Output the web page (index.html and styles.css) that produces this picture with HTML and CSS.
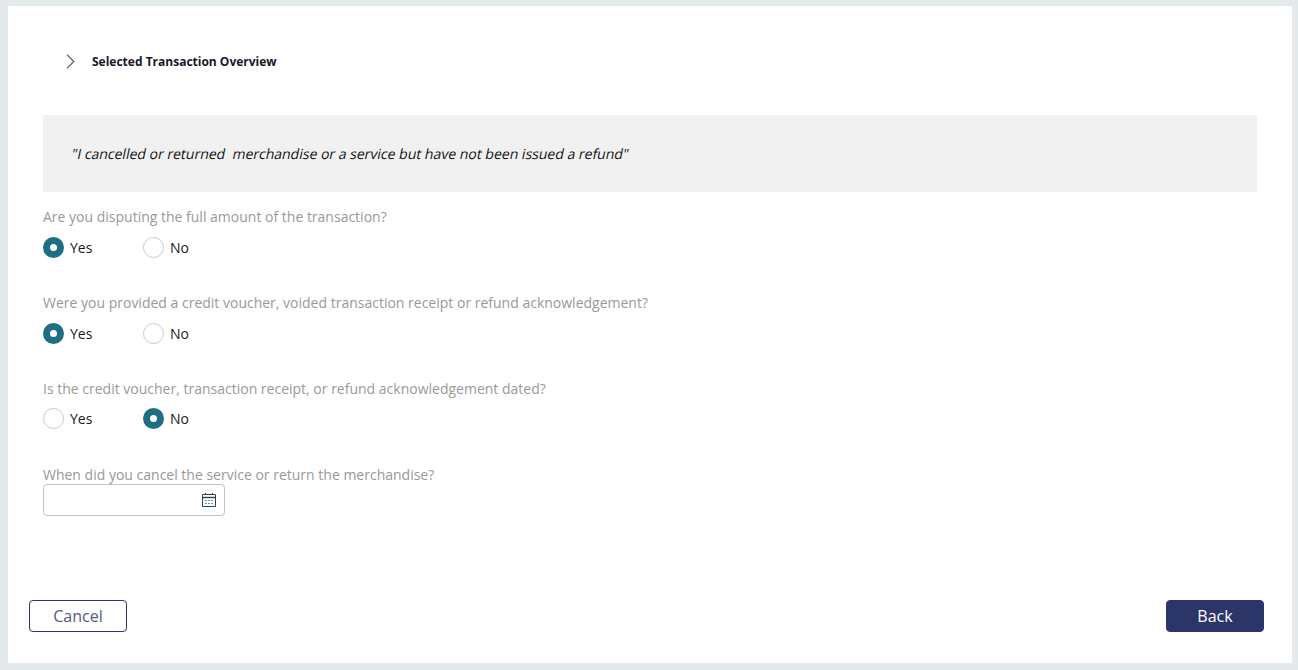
FILE: index.html
```html
<!DOCTYPE html>
<html lang="en">
<head>
<meta charset="utf-8">
<title>Dispute</title>
<link rel="stylesheet" href="styles.css">
</head>
<body>
<main class="card">
  <div class="content">
    <header class="overview">
      <svg class="chevron" width="9" height="15" viewBox="0 0 9 15"><path d="M1 .7 7.8 7.5 1 14.3" fill="none" stroke="#4a5568" stroke-width="1.1"/></svg>
      <h2 class="overview-title">Selected Transaction Overview</h2>
    </header>
    <div class="quote"><span class="quote-text">"I cancelled or returned&nbsp; merchandise or a service but have not been issued a refund"</span></div>
    <section class="question">
      <div class="label">Are you disputing the full amount of the transaction?</div>
      <div class="radios">
        <label class="radio"><span class="dot on"></span>Yes</label>
        <label class="radio"><span class="dot"></span>No</label>
      </div>
    </section>
    <section class="question">
      <div class="label">Were you provided a credit voucher, voided transaction receipt or refund acknowledgement?</div>
      <div class="radios">
        <label class="radio"><span class="dot on"></span>Yes</label>
        <label class="radio"><span class="dot"></span>No</label>
      </div>
    </section>
    <section class="question">
      <div class="label">Is the credit voucher, transaction receipt, or refund acknowledgement dated?</div>
      <div class="radios tight">
        <label class="radio"><span class="dot"></span>Yes</label>
        <label class="radio"><span class="dot on"></span>No</label>
      </div>
    </section>
    <section class="question">
      <div class="label">When did you cancel the service or return the merchandise?</div>
      <div class="date">
        <svg width="14" height="14" viewBox="0 0 14 14" fill="none"><path d="M.5 1.5h13v12H.5z" stroke="#2b4257"/><path d="M0 4.5h14" stroke="#2b4257" stroke-width="1.4"/><path d="M3.5 0v2M10.5 0v2" stroke="#2b4257"/><path d="M3 7.5h2M6 7.5h2M9 7.5h2M3 10.5h2M6 10.5h2M9 10.5h2" stroke="#7d8b99"/></svg>
      </div>
    </section>
  </div>
  <footer class="actions">
    <button class="btn ghost">Cancel</button>
    <button class="btn solid">Back</button>
  </footer>
</main>
</body>
</html>
```
FILE: styles.css
```css
* { box-sizing: border-box; }
html, body { height: 100%; }
body {
  margin: 0;
  padding: 6px 6px 7px 8px;
  background: #e4e9ec;
  font-family: "Open Sans", "Liberation Sans", sans-serif;
  font-size: 14px;
  color: #1a1a1a;
}
.card {
  height: 657px;
  background: #fff;
  display: flex;
  flex-direction: column;
  justify-content: space-between;
  padding: 0 28px 31px 21px;
}
.content { padding: 0 7px 0 14px; }
.overview {
  display: flex;
  align-items: center;
  height: 109px;
  padding-top: 2px;
  padding-left: 23px;
  gap: 17px;
}
.chevron { display: block; }
.overview-title {
  margin: 0;
  font-size: 12px;
  line-height: 16px;
  font-weight: 700;
  color: #17172b;
}
.quote {
  margin: 0 0 15px;
  height: 77px;
  padding: 0 29px;
  display: flex;
  align-items: center;
  background: #f1f1f1;
  color: #111;
}
.quote-text {
  display: block;
  transform: skewX(-12deg);
  transform-origin: left center;
}
.question { height: 86px; }
.label { height: 20px; line-height: 20px; color: #999; }
.radios {
  display: flex;
  gap: 50px;
  margin-top: 10px;
}
.radios.tight { margin-top: 9px; }
.radio {
  display: flex;
  align-items: center;
  gap: 6px;
  height: 21px;
  width: 50px;
}
.dot {
  width: 21px;
  height: 21px;
  border-radius: 50%;
  border: 1px solid #c5cad3;
  background: #fff;
  flex: none;
}
.dot.on {
  border: 7px solid #1f6e83;
}
.date {
  width: 182px;
  height: 32px;
  margin-top: -1px;
  border: 1px solid #bfc3d0;
  border-radius: 4px;
  display: flex;
  align-items: center;
  justify-content: flex-end;
  padding-right: 8px;
  background: #fff;
}
.actions { display: flex; justify-content: space-between; }
.btn {
  width: 98px;
  height: 32px;
  border-radius: 4px;
  font-family: inherit;
  font-size: 16px;
  padding: 0;
  border: 1px solid #2c3568;
}
.ghost { background: #fff; color: #535a85; }
.solid { background: #2c3568; color: #fff; }
```
